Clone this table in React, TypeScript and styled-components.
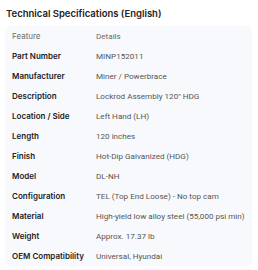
import React from 'react'
import styled, { createGlobalStyle } from 'styled-components'

const GlobalStyle = createGlobalStyle`
  body {
    margin: 0;
    background: #fff;
    font-family: Inter, "Noto Sans", sans-serif;
  }
`

const Page = styled.div`
  padding: 8px 6px 0 5px;
`

const Title = styled.h3`
  margin: 0 0 7px 1px;
  font-size: 9.5px;
  line-height: 11px;
  font-weight: 600;
  color: #222;
`

const Card = styled.div`
  background: #f8f9fc;
  border-radius: 6px;
  padding: 0 7px;
`

const Row = styled.div`
  display: grid;
  grid-template-columns: 84px 1fr;
  align-items: center;
  height: 20px;
`

const Label = styled.div<{ $head?: boolean }>`
  font-family: Inter, "Noto Sans", sans-serif;
  font-size: 8px;
  font-weight: ${({ $head }) => ($head ? 400 : 600)};
  color: ${({ $head }) => ($head ? '#6b6b6b' : '#222')};
  white-space: nowrap;
`

const Value = styled.div<{ $head?: boolean }>`
  font-family: Roboto, "Noto Sans", sans-serif;
  font-size: 8.1px;
  color: ${({ $head }) => ($head ? '#6b6b6b' : '#555')};
  white-space: nowrap;
`

const Footer = styled.div`
  margin-top: 2px;
  height: 20px;
  background: #f8f9fc;
  border-radius: 6px;
`

const specs: [string, string][] = [
  ['Part Number', 'MINP152011'],
  ['Manufacturer', 'Miner / Powerbrace'],
  ['Description', 'Lockrod Assembly 120" HDG'],
  ['Location / Side', 'Left Hand (LH)'],
  ['Length', '120 inches'],
  ['Finish', 'Hot-Dip Galvanized (HDG)'],
  ['Model', 'DL-NH'],
  ['Configuration', 'TEL (Top End Loose) - No top cam'],
  ['Material', 'High-yield low alloy steel (55,000 psi min)'],
  ['Weight', 'Approx. 17.37 lb'],
  ['OEM Compatibility', 'Universal, Hyundai'],
]

const App: React.FunctionComponent = () => (
  <Page>
    <GlobalStyle />
    <Title>Technical Specifications (English)</Title>
    <Card>
      <Row>
        <Label $head>Feature</Label>
        <Value $head>Details</Value>
      </Row>
      {specs.map(([label, value]) => (
        <Row key={label}>
          <Label>{label}</Label>
          <Value>{value}</Value>
        </Row>
      ))}
    </Card>
    <Footer />
  </Page>
)

export default App
